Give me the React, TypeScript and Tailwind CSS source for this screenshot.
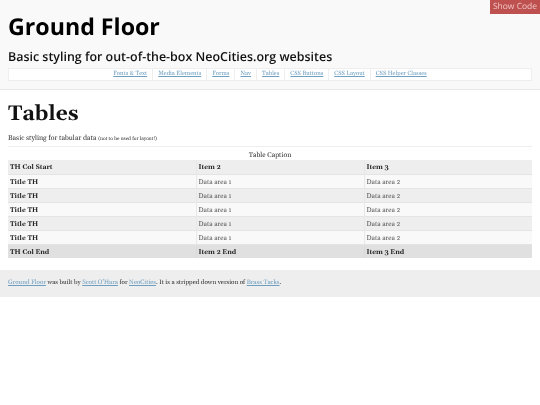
const serif = "font-['Gelasio','Liberation_Serif',serif]";

const navItems = ["Fonts & Text", "Media Elements", "Forms", "Nav", "Tables", "CSS Buttons", "CSS Layout", "CSS Helper Classes"];
const rows = [0, 1, 2, 3, 4];

function NavLink({ label, last }: { label: string; last: boolean }) {
  return (
    <li className={`flex h-full items-center px-[5px] ${last ? "" : "border-r border-[#eeeeee]"}`}>
      <a href="#" className="text-[#6f9fc0] underline">
        {label}
      </a>
    </li>
  );
}

export default function App() {
  return (
    <div className={`relative min-h-[405px] w-[540px] overflow-hidden bg-white text-[#333] will-change-transform [text-rendering:geometricPrecision] ${serif}`}>
      <a href="#" className="absolute right-0 top-0 flex h-[14px] w-[50px] items-center justify-center bg-[#bf5050] font-['Open_Sans',sans-serif] text-[8.5px] text-[#eec4c4]">
        Show Code
      </a>

      <header className="h-[90px] border-b border-[#e8e8e8] bg-[#f9f9f9] px-2 pt-[10px]">
        <h1 className="font-['Open_Sans',sans-serif] text-[23.2px] font-bold leading-[32px] text-black">Ground Floor</h1>
        <h2 className="mt-[5px] font-['Open_Sans',sans-serif] text-[12.45px] font-semibold leading-[20px] text-[#111]">
          Basic styling for out-of-the-box NeoCities.org websites
        </h2>
        <ul className="mt-[1px] flex h-[13px] w-[524px] items-center justify-center border border-[#eeeeee] bg-white text-[6px]">
          {navItems.map((item, i) => (
            <NavLink key={item} label={item} last={i === navItems.length - 1} />
          ))}
        </ul>
      </header>

      <main className="px-2 pt-[9px]">
        <h1 className="text-[21px] font-bold leading-[32px] text-[#111]">Tables</h1>
        <p className="mt-[3px] text-[7px] leading-[10px]">
          Basic styling for tabular data <small className="text-[5px]">(not to be used for layout!)</small>
        </p>
        <div className="mt-[2px] h-px w-[524px] bg-[#eeeeee]" />
        <table className="w-[524px] table-fixed border-collapse text-[6.7px] leading-[10px]">
          <caption className="h-[13px] pt-[4px] text-[6.9px] leading-[10px]">Table Caption</caption>
          <colgroup>
            <col className="w-[188px]" />
            <col className="w-[168px]" />
            <col className="w-[168px]" />
          </colgroup>
          <thead>
            <tr className="h-[14px] border-b border-[#e4e4e4] bg-[#eeeeee] text-left font-bold text-[#222]">
              <th className="border-r border-[#e8e8e8] px-[2px] pt-[3px]">TH Col Start</th>
              <th className="border-r border-[#e8e8e8] px-[2px] pt-[3px]">Item 2</th>
              <th className="px-[2px] pt-[3px]">Item 3</th>
            </tr>
          </thead>
          <tbody>
            {rows.map((r) => (
              <tr key={r} className={`h-[14px] border-b border-[#e4e4e4] ${r % 2 === 0 ? "bg-[#f9f9f9]" : "bg-[#eeeeee]"}`}>
                <th className="border-r border-[#e8e8e8] px-[2px] pt-[3px] text-left font-bold text-[#222]">Title TH</th>
                <td className="border-r border-[#e8e8e8] px-[2px] pt-[3px] text-[#555]">Data area 1</td>
                <td className="px-[2px] pt-[3px] text-[#555]">Data area 2</td>
              </tr>
            ))}
          </tbody>
          <tfoot>
            <tr className="h-[14px] bg-[#e0e0e0] text-left font-bold text-[#222]">
              <th className="border-r border-[#dadada] px-[2px] pt-[3px]">TH Col End</th>
              <th className="border-r border-[#dadada] px-[2px] pt-[3px]">Item 2 End</th>
              <th className="px-[2px] pt-[3px]">Item 3 End</th>
            </tr>
          </tfoot>
        </table>
      </main>

      <footer className="mt-[12px] flex h-[27px] items-center bg-[#eeeeee] px-2 pt-px text-[6.3px]">
        <p>
          <a href="#" className="text-[#6f9fc0] underline">Ground Floor</a> was built by{" "}
          <a href="#" className="text-[#6f9fc0] underline">Scott O'Hara</a> for{" "}
          <a href="#" className="text-[#6f9fc0] underline">NeoCities</a>. It is a stripped down version of{" "}
          <a href="#" className="text-[#6f9fc0] underline">Brass Tacks</a>.
        </p>
      </footer>
    </div>
  );
}
